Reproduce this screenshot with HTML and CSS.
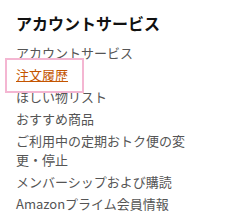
FILE: index.html
```html
<!DOCTYPE html>
<html>
<head>
    <title>アカウントサービス</title>
    <link rel="stylesheet" href="styles.css">
</head>
<body>
    <div class="account-box">
        <h2>アカウントサービス</h2>
        <ul class="account-links">
            <li><a href="#">アカウントサービス</a></li>
            <li class="marked"><a href="#" class="active">注文履歴</a></li>
            <li><a href="#">ほしい物リスト</a></li>
            <li><a href="#">おすすめ商品</a></li>
            <li><a href="#">ご利用中の定期おトク便の変更・停止</a></li>
            <li><a href="#">メンバーシップおよび購読</a></li>
            <li><a href="#">Amazonプライム会員情報</a></li>
        </ul>
    </div>
</body>
</html>
```

FILE: styles.css
```css
/* GENERAL */
body {
    margin: 0;
    padding: 0;
    background-color: #fff;
    font-family: "Noto Sans CJK JP", "Liberation Sans", sans-serif;
}

.account-box {
    padding: 11px 0 0 16px;
    width: 176px;
}

h2 {
    font-size: 16px;
    line-height: 24px;
    font-weight: bold;
    color: #111;
    margin: 0 0 8px 0;
}

/* LINK LIST */
.account-links {
    list-style: none;
    margin: 0;
    padding: 0;
}

.account-links li {
    font-size: 13px;
    line-height: 19px;
    margin-bottom: 3px;
}

.account-links a {
    color: #555;
    text-decoration: none;
}

.account-links a.active {
    color: #c45500;
    text-decoration: underline;
}

/* pink highlight round the current item */
.marked {
    position: relative;
}

.marked::after {
    content: "";
    position: absolute;
    left: -11px;
    top: -7px;
    width: 75px;
    height: 31px;
    border: 2.5px solid #f4b6d2;
    pointer-events: none;
}
```
